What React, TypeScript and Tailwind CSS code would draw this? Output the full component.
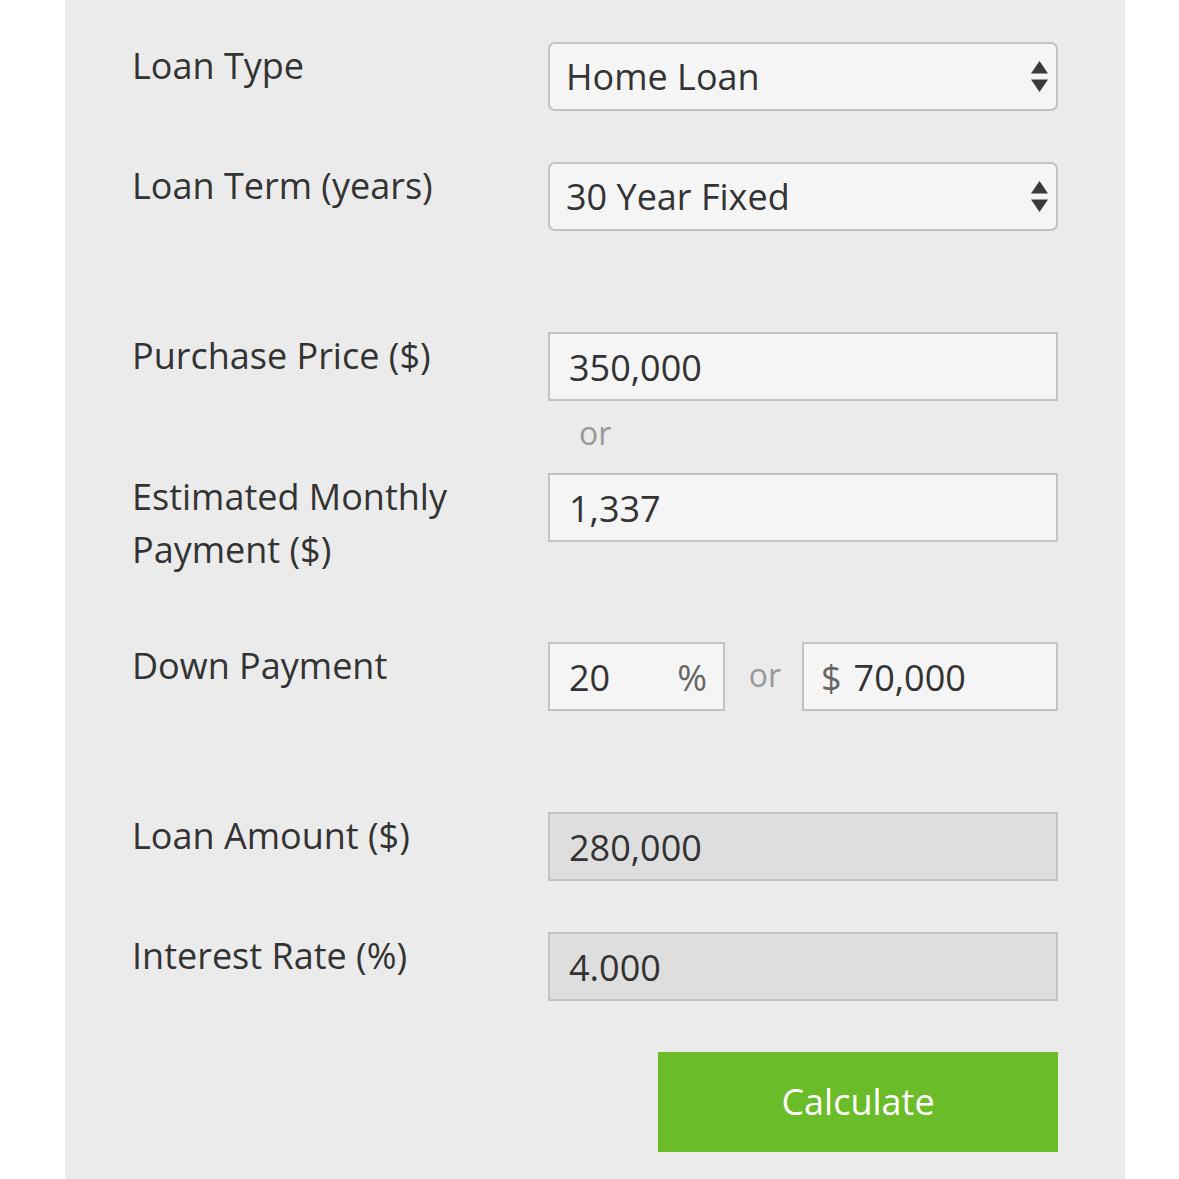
import React from "react";

const font = { fontFamily: '"Open Sans", "Liberation Sans", sans-serif' };

function Arrows() {
  return (
    <svg width="17" height="31" viewBox="0 0 17 31" className="shrink-0">
      <polygon points="8.5,0 17,12.5 0,12.5" fill="#3a3a3a" />
      <polygon points="0,18.5 17,18.5 8.5,31" fill="#3a3a3a" />
    </svg>
  );
}

function Select({ value }: { value: string }) {
  return (
    <div className="flex h-[69px] w-full items-center justify-between rounded-[7px] border-2 border-[#c3c3c3] bg-[#f5f5f5] pl-[16px] pr-[8px] text-[36px] text-[#333333]">
      <span>{value}</span>
      <Arrows />
    </div>
  );
}

function Field({ value, disabled }: { value: string; disabled?: boolean }) {
  return (
    <div
      className={`flex h-[69px] w-full items-center border-2 border-[#c3c3c3] pl-[19px] pt-[3px] text-[36px] text-[#333333] ${
        disabled ? "bg-[#dedede]" : "bg-[#f5f5f5]"
      }`}
    >
      {value}
    </div>
  );
}

function Label({ children }: { children: React.ReactNode }) {
  return <div className="-mt-[3px] pr-4 text-[36px] leading-[53px] text-[#333333]">{children}</div>;
}

export default function App() {
  return (
    <div className="min-h-[1179px] bg-white" style={font}>
      <div className="ml-[65px] flex min-h-[1179px] w-[1060px] flex-col bg-[#ebebeb] px-[67px] pb-[27px] pt-[42px]">
        <div className="grid grid-cols-[416px_1fr] items-start">
          <Label>Loan Type</Label>
          <Select value="Home Loan" />
        </div>
        <div className="mt-[51px] grid grid-cols-[416px_1fr] items-start">
          <Label>Loan Term (years)</Label>
          <Select value="30 Year Fixed" />
        </div>

        <div className="mt-[101px] grid grid-cols-[416px_1fr] items-start">
          <Label>Purchase Price ($)</Label>
          <Field value="350,000" />
        </div>
        <div className="grid grid-cols-[416px_1fr]">
          <div />
          <div className="flex h-[72px] items-center pb-[8px] pl-[31px] text-[32px] text-[#999999]">or</div>
        </div>
        <div className="grid grid-cols-[416px_1fr] items-start">
          <Label>
            Estimated Monthly
            <br />
            Payment ($)
          </Label>
          <Field value="1,337" />
        </div>

        <div className="mt-[66px] grid grid-cols-[416px_1fr] items-start">
          <Label>Down Payment</Label>
          <div className="flex items-center">
            <div className="flex h-[69px] w-[177px] items-center justify-between border-2 border-[#c3c3c3] bg-[#f5f5f5] pl-[19px] pr-[16px] pt-[3px] text-[36px] text-[#333333]">
              <span>20</span>
              <span className="text-[#666666]">%</span>
            </div>
            <div className="flex w-[77px] justify-center pb-[4px] pl-[3px] text-[32px] text-[#999999]">or</div>
            <div className="flex h-[69px] flex-1 items-center border-2 border-[#c3c3c3] bg-[#f5f5f5] pl-[17px] pt-[3px] text-[36px] text-[#333333]">
              <span className="text-[#666666]">$</span>
              <span className="ml-[12px]">70,000</span>
            </div>
          </div>
        </div>

        <div className="mt-[101px] grid grid-cols-[416px_1fr] items-start">
          <Label>Loan Amount ($)</Label>
          <Field value="280,000" disabled />
        </div>
        <div className="mt-[51px] grid grid-cols-[416px_1fr] items-start">
          <Label>Interest Rate (%)</Label>
          <Field value="4.000" disabled />
        </div>

        <div className="mt-[51px] flex justify-end">
          <button className="flex h-[100px] w-[400px] items-center justify-center bg-[#6abd28] text-[36px] text-white">
            Calculate
          </button>
        </div>
      </div>
    </div>
  );
}
